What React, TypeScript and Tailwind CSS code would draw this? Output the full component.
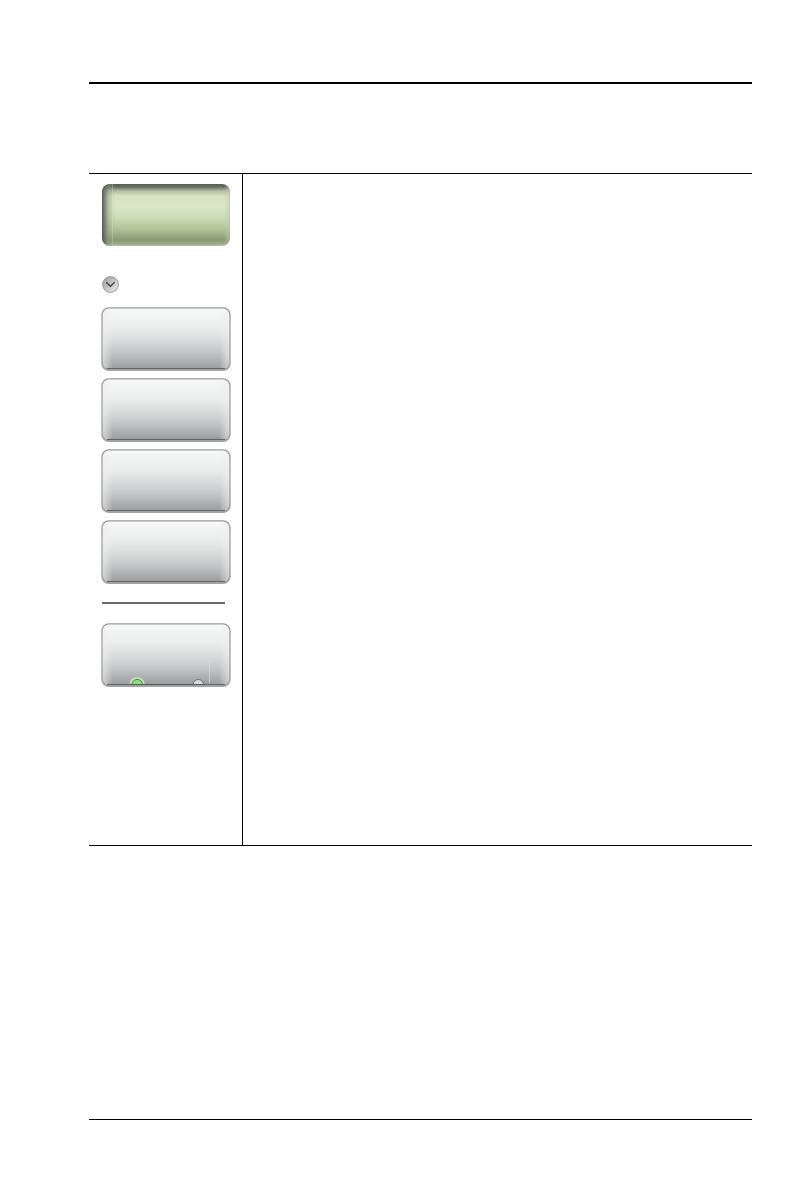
import React from "react";

function MenuTitle() {
  return (
    <button
      type="button"
      aria-label="Menu title"
      className="relative mx-px block h-[62px] w-32 overflow-hidden rounded-lg bg-[linear-gradient(180deg,#565d57_0px,#697064_3px,#b3bda1_7px,#d6e2c2_12px,#d9e7c5_22px,#cbddb6_34px,#b1c397_45px,#8a9a76_56px,#97a684_59px,#b3bda6_62px)]"
    >
      <span className="absolute inset-0 bg-[linear-gradient(90deg,rgba(75,82,82,0.95)_0px,rgba(95,103,97,0.7)_3px,rgba(140,152,126,0.4)_7px,rgba(170,185,150,0)_13px,rgba(170,185,150,0)_122px,rgba(195,205,182,0.4)_126px,rgba(175,184,165,0.6)_128px)]" />
      <span className="absolute inset-y-0 left-[10px] w-px bg-[#edf5df]/25" />
    </button>
  );
}

function KeyFace() {
  return (
    <svg viewBox="0 0 130 64" className="block h-16 w-full" aria-hidden="true">
      <defs>
        <linearGradient id="face" x1="0" y1="0" x2="0" y2="1">
          <stop offset="0" stopColor="#f7f8f8" />
          <stop offset="0.3" stopColor="#eceeed" />
          <stop offset="0.52" stopColor="#dadcdc" />
          <stop offset="0.75" stopColor="#bfc1c3" />
          <stop offset="1" stopColor="#9a9b9d" />
        </linearGradient>
        <linearGradient id="side" x1="0" y1="0" x2="1" y2="0">
          <stop offset="0" stopColor="#eeeeee" stopOpacity="0.6" />
          <stop offset="0.03" stopColor="#eeeeee" stopOpacity="0.4" />
          <stop offset="0.08" stopColor="#eeeeee" stopOpacity="0" />
          <stop offset="0.92" stopColor="#eeeeee" stopOpacity="0" />
          <stop offset="0.97" stopColor="#eeeeee" stopOpacity="0.4" />
          <stop offset="1" stopColor="#eeeeee" stopOpacity="0.6" />
        </linearGradient>
        <linearGradient id="rim" x1="0" y1="0" x2="0" y2="1">
          <stop offset="0" stopColor="#9a9a9a" />
          <stop offset="0.3" stopColor="#a9a9a9" />
          <stop offset="1" stopColor="#a2a2a2" />
        </linearGradient>
      </defs>
      <rect x="0.3" y="0.3" width="129.4" height="63.6" rx="7.5" fill="url(#rim)" />
      <rect x="1.8" y="1.6" width="126.4" height="60.4" rx="6.2" fill="url(#face)" />
      <rect x="1.8" y="1.6" width="126.4" height="60.4" rx="6.2" fill="url(#side)" />
      <path d="M6 61.5H124" stroke="#636466" strokeWidth="1" />
    </svg>
  );
}

function Key({ label, children }: { label: string; children?: React.ReactNode }) {
  return (
    <button type="button" aria-label={label} className="relative block h-16 w-[130px]">
      <KeyFace />
      {children}
    </button>
  );
}

function ToggleLights() {
  return (
    <svg viewBox="0 0 130 64" className="absolute inset-0 h-16 w-full" aria-hidden="true">
      <path d="M28.4 61.5C28.4 51.9 43.6 51.9 43.6 61.5Z" fill="#dcf3d3" opacity="0.7" />
      <path d="M31 61.5C31 54.7 41.4 54.7 41.4 61.5Z" fill="#86e57b" />
      <path d="M31 61.5C31 54.7 41.4 54.7 41.4 61.5" fill="none" stroke="#3f7d3c" strokeWidth="0.9" />
      <path d="M92.2 61.5C92.2 54.9 102.4 54.9 102.4 61.5Z" fill="#dadbdb" />
      <path d="M92.2 61.5C92.2 54.9 102.4 54.9 102.4 61.5" fill="none" stroke="#5d5e60" strokeWidth="0.9" />
      <path d="M108.5 36V60" stroke="#e2e2e2" strokeWidth="1" opacity="0.55" />
      <path d="M28 61.5H104" stroke="#555b57" strokeWidth="1" />
    </svg>
  );
}

function ExpandButton() {
  return (
    <button type="button" aria-label="Expand" className="mx-px block size-[17px]">
      <svg viewBox="0 0 17 17" className="block size-full" aria-hidden="true">
        <defs>
          <linearGradient id="disc" x1="0" y1="0" x2="1" y2="1">
            <stop offset="0" stopColor="#9c9c9c" />
            <stop offset="0.5" stopColor="#c4c4c4" />
            <stop offset="1" stopColor="#f0f0f0" />
          </linearGradient>
        </defs>
        <circle cx="8.5" cy="8.5" r="7.9" fill="url(#disc)" stroke="#8f8f8f" strokeWidth="0.9" />
        <path d="M4.2 6.3L8.4 10.3L12.7 6.3" fill="none" stroke="#414141" strokeWidth="1.3" />
      </svg>
    </button>
  );
}

export default function App() {
  return (
    <div className="min-h-screen bg-white pt-[82px] pr-10 pb-[72px] pl-[89px] font-['Liberation_Sans',sans-serif]">
      <header className="border-t-2 border-black pb-[89px]" />
      <main className="flex min-h-[673px] border-y border-black">
        <nav aria-label="Softkeys" className="w-[153px] shrink-0 pt-[10px] pl-3">
          <MenuTitle />
          <div className="pt-[30px] pb-[14px]">
            <ExpandButton />
          </div>
          <div className="flex flex-col gap-[7px]">
            <Key label="Softkey 1" />
            <Key label="Softkey 2" />
            <Key label="Softkey 3" />
            <Key label="Softkey 4" />
          </div>
          <hr className="mx-px mt-[18px] mb-[19px] w-[123px] border-t-2 border-[#6c6c6c]" />
          <Key label="Toggle softkey">
            <ToggleLights />
          </Key>
        </nav>
        <section className="grow border-l border-black" />
      </main>
      <footer className="mt-[273px] border-t border-black" />
    </div>
  );
}
